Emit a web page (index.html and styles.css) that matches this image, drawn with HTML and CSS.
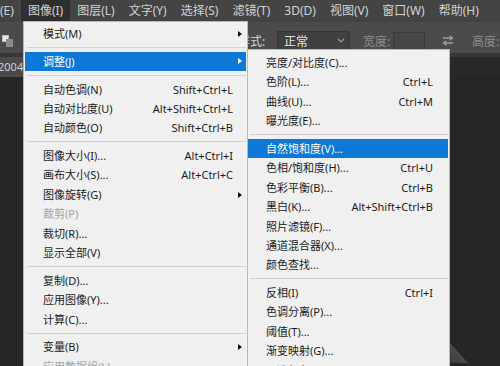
FILE: index.html
```html
<!DOCTYPE html>
<html lang="zh-CN">
<head>
    <meta charset="utf-8" />
    <title>图像 - 调整</title>
    <link rel="stylesheet" href="styles.css">
</head>
<body>
  <div id="app">
      <div id="menubar">
          <span class="top-item">编辑(E)</span>
          <span class="top-item open">图像(I)</span>
          <span class="top-item">图层(L)</span>
          <span class="top-item">文字(Y)</span>
          <span class="top-item">选择(S)</span>
          <span class="top-item">滤镜(T)</span>
          <span class="top-item">3D(D)</span>
          <span class="top-item">视图(V)</span>
          <span class="top-item">窗口(W)</span>
          <span class="top-item">帮助(H)</span>
      </div>

      <div id="options">
          <svg class="tool-icon" width="11" height="12" viewBox="0 0 11 12">
            <rect x="0.5" y="0.5" width="6" height="6" fill="#e6e6e6" stroke="#bdbdbd" />
            <rect x="4" y="4" width="7" height="8" fill="#8a8a8a" />
          </svg>
          <span class="opt-label style-label">样式:</span>
          <div class="combo">
            <span>正常</span>
            <svg width="8" height="5" viewBox="0 0 8 5"><polyline points="1,1 4,4 7,1" fill="none" stroke="#9c9c9c" stroke-width="1.2" /></svg>
          </div>
          <span class="opt-label dim width-label">宽度:</span>
          <div class="field"></div>
          <svg class="swap" width="12" height="11" viewBox="0 0 12 11">
            <path d="M1 3h9M7.5 0.8 10.5 3 7.5 5.2" fill="none" stroke="#9a9a9a" stroke-width="1.3" />
            <path d="M11 8H2M4.5 5.8 1.5 8 4.5 10.2" fill="none" stroke="#9a9a9a" stroke-width="1.3" />
          </svg>
          <span class="opt-label dim height-label">高度:</span>
      </div>

      <div id="tabstrip"></div>
      <div id="tabs">
          <div class="doc-tab"><span>2004</span></div>
      </div>

      <ul class="menu" id="image-menu">
          <li class="item"><span>模式(M)</span><span class="arrow"></span></li>
          <li class="sep"></li>
          <li class="item active"><span>调整(J)</span><span class="arrow"></span></li>
          <li class="sep"></li>
          <li class="item"><span>自动色调(N)</span><span class="key">Shift+Ctrl+L</span></li>
          <li class="item"><span>自动对比度(U)</span><span class="key">Alt+Shift+Ctrl+L</span></li>
          <li class="item"><span>自动颜色(O)</span><span class="key">Shift+Ctrl+B</span></li>
          <li class="sep"></li>
          <li class="item"><span>图像大小(I)...</span><span class="key">Alt+Ctrl+I</span></li>
          <li class="item"><span>画布大小(S)...</span><span class="key">Alt+Ctrl+C</span></li>
          <li class="item"><span>图像旋转(G)</span><span class="arrow"></span></li>
          <li class="item disabled"><span>裁剪(P)</span></li>
          <li class="item"><span>裁切(R)...</span></li>
          <li class="item"><span>显示全部(V)</span></li>
          <li class="sep"></li>
          <li class="item"><span>复制(D)...</span></li>
          <li class="item"><span>应用图像(Y)...</span></li>
          <li class="item"><span>计算(C)...</span></li>
          <li class="sep"></li>
          <li class="item"><span>变量(B)</span><span class="arrow"></span></li>
          <li class="item disabled"><span>应用数据组(L)...</span></li>
      </ul>

      <ul class="menu" id="adjust-menu">
          <li class="item"><span>亮度/对比度(C)...</span></li>
          <li class="item"><span>色阶(L)...</span><span class="key">Ctrl+L</span></li>
          <li class="item"><span>曲线(U)...</span><span class="key">Ctrl+M</span></li>
          <li class="item"><span>曝光度(E)...</span></li>
          <li class="sep"></li>
          <li class="item active"><span>自然饱和度(V)...</span></li>
          <li class="item"><span>色相/饱和度(H)...</span><span class="key">Ctrl+U</span></li>
          <li class="item"><span>色彩平衡(B)...</span><span class="key">Ctrl+B</span></li>
          <li class="item"><span>黑白(K)...</span><span class="key">Alt+Shift+Ctrl+B</span></li>
          <li class="item"><span>照片滤镜(F)...</span></li>
          <li class="item"><span>通道混合器(X)...</span></li>
          <li class="item"><span>颜色查找...</span></li>
          <li class="sep"></li>
          <li class="item"><span>反相(I)</span><span class="key">Ctrl+I</span></li>
          <li class="item"><span>色调分离(P)...</span></li>
          <li class="item"><span>阈值(T)...</span></li>
          <li class="item"><span>渐变映射(G)...</span></li>
          <li class="item"><span>可选颜色(S)...</span></li>
      </ul>

      <div id="corner"></div>
  </div>
</body>
</html>
```

FILE: styles.css
```css
*{
    box-sizing: border-box;
}

body{
    margin: 0;
    background: #262626;
    font-family: "Noto Sans", "Noto Sans CJK SC", sans-serif;
    overflow: hidden;
}

#app{
    position: relative;
    width: 500px;
    height: 366px;
    overflow: hidden;
}

#menubar{
    display: flex;
    height: 22px;
    background: #444;
    color: #d2d2d2;
    font-size: 12px;
    line-height: 22px;
    white-space: nowrap;
}

.top-item{
    padding: 0 7px;
}

.top-item:first-child{
    margin-left: -31px;
}

.top-item.open{
    background: #2f2f2f;
}

#options{
    display: flex;
    align-items: center;
    height: 31px;
    padding-top: 6px;
    background: #4b4b4b;
    color: #d8d8d8;
    font-size: 12px;
    white-space: nowrap;
}

.tool-icon{
    margin-left: 2px;
    flex: none;
}

.opt-label{
    flex: none;
}

.style-label{
    margin-left: 225px;
    width: 36px;
}

.dim{
    color: #8c8c8c;
}

.combo{
    display: flex;
    align-items: center;
    justify-content: space-between;
    flex: none;
    width: 73px;
    height: 19px;
    margin-left: 3px;
    padding: 0 4px 0 6px;
    background: #404040;
    border: 1px solid #363636;
    color: #e2e2e2;
}

.width-label{
    margin-left: 13px;
    width: 28px;
}

.field{
    flex: none;
    width: 32px;
    height: 18px;
    margin-left: 2px;
    background: #464646;
    border: 1px solid #3a3a3a;
}

.swap{
    flex: none;
    margin-left: 17px;
}

.height-label{
    margin-left: 18px;
}

#tabstrip{
    height: 4px;
    background: #383838;
}

#tabs{
    height: 20px;
    background: #282828;
}

.doc-tab{
    width: 60px;
    height: 20px;
    background: #4a4a4a;
    color: #cfcfcf;
    font-size: 11px;
    line-height: 20px;
    overflow: hidden;
}

.doc-tab span{
    margin-left: -2px;
}

.menu{
    position: absolute;
    margin: 0;
    list-style: none;
    background: #f0f0f0;
    border: 1px solid #b8b8b8;
    color: #1b1b1b;
    font-size: 11px;
    white-space: nowrap;
}

#image-menu{
    left: 23px;
    top: 21px;
    width: 225px;
    height: 360px;
    padding: 2px 1px 0 1px;
}

#adjust-menu{
    left: 248px;
    top: 49px;
    width: 202px;
    height: 330px;
    padding: 3px 1px 0 0;
    border-left: none;
}

.item{
    display: flex;
    align-items: center;
    height: 19.4px;
    line-height: 19.4px;
    padding: 0 13px 0 18px;
}

#adjust-menu .item{
    padding: 0 15px 0 18px;
}

.item.active{
    background: #0d78d6;
    color: #fff;
}

.item.disabled{
    color: #a2a2a2;
}

.key{
    margin-left: auto;
}

.arrow{
    margin-left: auto;
    margin-right: -9px;
    width: 0;
    height: 0;
    border-left: 4px solid #111;
    border-top: 3.5px solid transparent;
    border-bottom: 3.5px solid transparent;
}

.active .arrow{
    border-left-color: #fff;
}

.sep{
    height: 1px;
    margin: 3.7px 0 3.7px 2px;
    background: #d2d2d2;
}

#corner{
    position: absolute;
    left: 450px;
    top: 343px;
    width: 18px;
    height: 20px;
    background: linear-gradient(45deg, #3a3a3a, #5a5a5a);
    clip-path: polygon(0 0, 0 100%, 100% 100%);
}
```
